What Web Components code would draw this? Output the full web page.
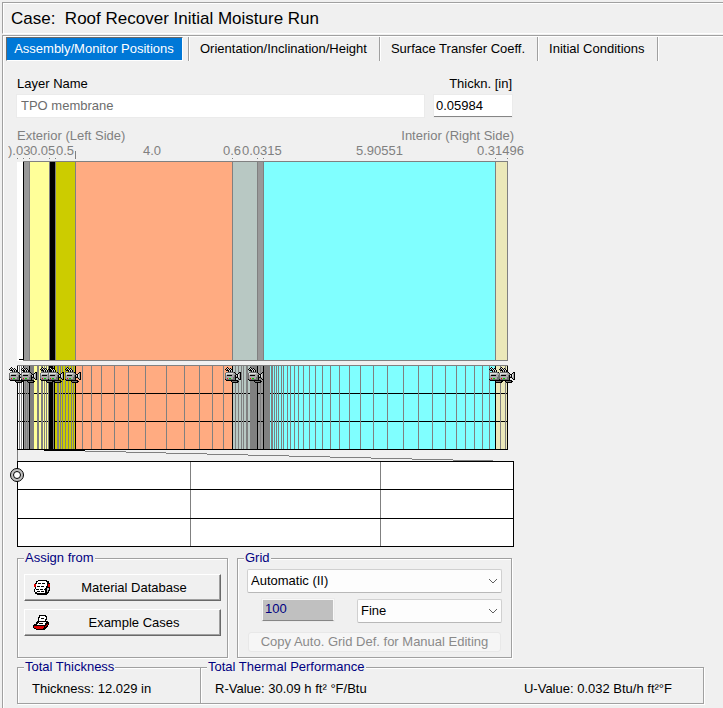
<!DOCTYPE html>
<html lang="en">
<head>
<meta charset="utf-8">
<title>Roof Recover Initial Moisture Run</title>
<style>
    html, body{
        height: 100%;
    }
    body{
        margin: 0;
        background: #f0f0f0;
        color: #000;
        font: 13px/16px "Liberation Sans", Arial, sans-serif;
    }
</style>
</head>
<body>
<case-window></case-window>

<script>
class CaseHeader extends HTMLElement{
    constructor(){
        super();
        this.attachShadow({mode:'open'});
        this.shadowRoot.innerHTML = `
            <style>
                :host{
                    display: block;
                    border-top: 1px solid #a0a0a0;
                    border-left: 1px solid #a0a0a0;
                    border-bottom: 1px solid #fff;
                    box-shadow: inset 1px 1px #fff;
                }
                h1{
                    margin: 0;
                    padding: 6px 8px 4px;
                    font-size: 17px;
                    line-height: 20px;
                    font-weight: normal;
                    white-space: pre;
                }
            </style>
            <h1><slot></slot></h1>
        `;
    }
}

class TabBar extends HTMLElement{
    constructor(){
        super();
        this.attachShadow({mode:'open'});
        this.shadowRoot.innerHTML = `
            <style>
                :host{
                    display: flex;
                    padding: 1px 0 0 3px;
                }
            </style>
            <slot></slot>
        `;
    }
}

class TabItem extends HTMLElement{
    constructor(){
        super();
        this.attachShadow({mode:'open'});
        this.shadowRoot.innerHTML = this.TabTemplate();
    }

    static get observedAttributes(){
        return['active'];
    }

    TabTemplate(){
        const active = this.hasAttribute('active');

        return `
            <style>
                :host{
                    display: block;
                    padding-right: ${active ? '5px' : '0'};
                    border-right: 1px solid #a0a0a0;
                    box-shadow: 1px 0 #fff;
                }
                button{
                    display: block;
                    margin: 0;
                    padding: ${active ? '2px 6px 2px 5px' : '3px 12px 3px 11px'};
                    border: ${active ? '1px solid' : '0'};
                    border-color: #696969 #fff #fff #696969;
                    min-width: ${active ? '177px' : '0'};
                    height: 24px;
                    font: inherit;
                    white-space: nowrap;
                    color: ${active ? '#fff' : '#000'};
                    background: ${active ? '#0078d7' : 'transparent'};
                }
            </style>
            <button type="button"><slot></slot></button>
        `;
    }

    attributeChangedCallback(){
        this.shadowRoot.innerHTML = this.TabTemplate();
    }
}

class TextField extends HTMLElement{
    constructor(){
        super();
        this.attachShadow({mode:'open'});
    }

    connectedCallback(){
        const tone = this.getAttribute('tone') || 'edit';
        const label = this.getAttribute('label');

        this.shadowRoot.innerHTML = `
            <style>
                :host{
                    display: block;
                }
                label{
                    display: block;
                    margin-bottom: 3px;
                }
                :host([align=right]) label{
                    text-align: right;
                }
                input{
                    display: block;
                    box-sizing: border-box;
                    width: 100%;
                    height: 22px;
                    margin: 0;
                    padding: 0 2px 1px;
                    border: 0;
                    border-radius: 0;
                    font: inherit;
                    color: #000;
                    background: #fff;
                    outline: 1px solid #ebebeb;
                }
                .edit{
                    border-bottom: 1px solid #868686;
                }
                .locked{
                    padding: 0 4px 2px;
                    color: #6d6d6d;
                }
                .gray{
                    padding: 0 2px 3px;
                    border: 1px solid #f8f8f8;
                    border-bottom: 1px solid #868686;
                    color: navy;
                    background: #c0c0c0;
                }
            </style>
            ${label ? `<label for="field">${label}</label>` : ''}
            <input id="field" type="text" class="${tone}" value="${this.getAttribute('value')}"
                ${label ? '' : `aria-label="${this.getAttribute('name')}"`} ${tone === 'edit' ? '' : 'readonly'}>
        `;
    }
}

class SelectBox extends HTMLElement{
    constructor(){
        super();
        this.attachShadow({mode:'open'});
    }

    connectedCallback(){
        const options = this.getAttribute('options').split('|');

        this.shadowRoot.innerHTML = `
            <style>
                :host{
                    display: grid;
                    align-items: center;
                }
                select, svg{
                    grid-area: 1 / 1;
                }
                select{
                    appearance: none;
                    width: 100%;
                    height: 24px;
                    margin: 0;
                    padding: 0 24px 0 3px;
                    border: 1px solid #d0d0d0;
                    border-bottom-color: #b8b8b8;
                    border-radius: 2px;
                    background: #fdfdfd;
                    color: #000;
                    font: inherit;
                }
                svg{
                    justify-self: end;
                    margin-right: 4px;
                    pointer-events: none;
                }
            </style>
            <select aria-label="${this.getAttribute('name')}">
                ${options.map(o => `<option>${o}</option>`).join('')}
            </select>
            <svg width="10" height="6" viewBox="0 0 10 6"><path d="M1 1l4 4 4-4" fill="none" stroke="#606060"/></svg>
        `;
    }
}

class GroupBox extends HTMLElement{
    constructor(){
        super();
        this.attachShadow({mode:'open'});
        this.shadowRoot.innerHTML = `
            <style>
                :host{
                    display: block;
                }
                fieldset{
                    box-sizing: border-box;
                    height: 100%;
                    min-width: 0;
                    margin: 0;
                    padding: 0 6px;
                    border: 1px solid #a0a0a0;
                    box-shadow: 1px 1px #fff, inset 1px 1px #fff;
                }
                legend{
                    padding: 0 1px;
                    color: navy;
                    background: #f0f0f0;
                    line-height: 14px;
                }
            </style>
            <fieldset>
                <legend>${this.getAttribute('caption')}</legend>
                <slot></slot>
            </fieldset>
        `;
    }
}

class ActionButton extends HTMLElement{
    constructor(){
        super();
        this.attachShadow({mode:'open'});
        this.shadowRoot.innerHTML = `
            <style>
                :host{
                    display: block;
                }
                button{
                    display: flex;
                    align-items: center;
                    width: 100%;
                    height: 27px;
                    margin: 0;
                    padding: 0 8px;
                    border: 1px solid;
                    border-color: #fff #696969 #696969 #fff;
                    box-shadow: inset -1px -1px #a0a0a0;
                    background: #f0f0f0;
                    color: #000;
                    font: inherit;
                }
                span{
                    flex: 1;
                    padding-left: 5px;
                }
            </style>
            <button type="button"><slot name="icon"></slot><span><slot></slot></span></button>
        `;
    }
}

// Camera sprite, one character per pixel
const CAMERA = [
    '..k.............',
    '.kwk.k..........',
    'k.kwkwk.........',
    '.kkkwkwk........',
    '...kgkgk........',
    '.ddddddddk....kk',
    'dwwwwwwwggk..kgk',
    'dwggggggggdkkwgk',
    'dgkkkkkggdkwkwgk',
    'dggggggggdkgkwgk',
    'dgggggggddkkkggk',
    'dgrgnnggddk..kgk',
    'kdddddddddk...kk',
    '.kkkkkkkkkkkk...',
    '......kdddddkk..',
    '.......kkkkkk...'
];
const INK = {k:'#000', g:'#a8a8a8', w:'#e0e0e0', d:'#707070', r:'#f00000', n:'#00d000'};

function sprite(rows, ink, x, y){
    let out = '';
    rows.forEach((row, j) => {
        for(let i = 0; i < row.length; i++){
            if(ink[row[i]]) out += `<rect x="${x + i}" y="${y + j}" width="1" height="1" fill="${ink[row[i]]}"/>`;
        }
    });
    return out;
}

// Layers from the exterior side: start, end, fill
const LAYERS = [
    [0, 6, '#fff'],
    [6, 12, '#999'],
    [12, 32, '#ff9'],
    [32, 38, '#000'],
    [38, 58, '#cc0'],
    [58, 215, '#ffab81'],
    [215, 240, '#b8c8c3'],
    [240, 246, '#999'],
    [246, 478, '#80ffff'],
    [478, 490, '#ebe8b9']
];

class LayerDiagram extends HTMLElement{
    constructor(){
        super();
        this.attachShadow({mode:'open'});

        const fills = LAYERS.map(([a, b, c]) => `<rect x="${a}" y="18" width="${b - a}" height="199" fill="${c}"/>`).join('');
        const edges = [12, 32, 38, 58, 215, 240, 246, 478, 490].map(x => `<rect x="${x}" y="17" width="1" height="200" fill="#808080"/>`).join('');
        const ticks = [0, 6, 12, 32, 38, 215, 240, 246, 478, 490].map(x => `<rect x="${x}" y="14" width="1" height="1" fill="#808080"/>`).join('');

        this.shadowRoot.innerHTML = `
            <style>
                :host{
                    display: block;
                }
                .sides{
                    display: flex;
                    justify-content: space-between;
                    color: #808080;
                }
                svg{
                    display: block;
                    margin-left: -9px;
                    shape-rendering: crispEdges;
                }
                text{
                    font: inherit;
                    fill: #808080;
                }
            </style>
            <div class="sides"><span>Exterior (Left Side)</span><span>Interior (Right Side)</span></div>
            <svg width="520" height="217" viewBox="-9 0 520 217">
                <text x="-9" y="11">).03</text>
                <text x="13" y="11">0.05</text>
                <text x="39" y="11">0.5</text>
                <text x="126" y="11">4.0</text>
                <text x="206" y="11">0.6</text>
                <text x="225" y="11">0.0315</text>
                <text x="339" y="11">5.90551</text>
                <text x="460" y="11">0.31496</text>
                <rect x="58" y="7" width="1" height="8" fill="#808080"/>
                ${ticks}
                ${fills}
                <rect x="6" y="17" width="485" height="1" fill="#808080"/>
                ${edges}
                <rect x="6" y="18" width="1" height="199" fill="#000"/>
                <rect x="6" y="216" width="485" height="1" fill="#808080"/>
                <rect x="2" y="215" width="4" height="1" fill="#000"/>
            </svg>
        `;
    }
}

class MeshDiagram extends HTMLElement{
    constructor(){
        super();
        this.attachShadow({mode:'open'});

        const mesh = [2, 4, 8, 10, 13, 14, 15, 16, 20, 21, 24, 25, 27, 29, 31, 36, 40, 41, 43, 45, 48, 51, 54, 56,
            65, 74, 84, 97, 111, 128, 149, 167, 182, 195, 206, 218, 221, 224, 226, 229, 230, 233, 243,
            254, 255, 257, 259, 261, 264, 266, 270, 273, 277, 281, 286, 292, 298, 305, 313, 322, 332, 343, 356, 370,
            386, 401, 415, 428, 439, 448, 457, 465, 472, 483, 488];
        const lines = mesh.map(x => `<rect x="${x}" y="0" width="1" height="84" fill="#808080"/>`).join('');
        const bounds = [0, 6, 12, 58, 215, 240, 246, 478, 490].map(x => `<rect x="${x}" y="0" width="1" height="85" fill="#000"/>`).join('');
        const dense = [[13, 4], [234, 6], [247, 6]].map(([x, w]) => `<rect x="${x}" y="0" width="${w}" height="84" fill="#808080"/>`).join('');
        const fills = LAYERS.map(([a, b, c]) => `<rect x="${a}" y="0" width="${b - a}" height="84" fill="${c}"/>`).join('');
        const rows = [28, 56, 84].map(y => `<rect x="0" y="${y}" width="491" height="1" fill="#000"/>`).join('');
        const cameras = [-8, 4, 23, 31, 48, 208, 231, 472, 482].map(x => sprite(CAMERA, INK, x, 2)).join('');

        this.shadowRoot.innerHTML = `
            <style>
                :host{
                    display: block;
                }
                svg{
                    display: block;
                    margin-left: -9px;
                    shape-rendering: crispEdges;
                }
            </style>
            <svg width="520" height="96" viewBox="-9 0 520 96">
                ${fills}
                ${rows}
                ${lines}
                ${dense}
                ${bounds}
                <rect x="0" y="0" width="491" height="1" fill="#808080"/>
                ${cameras}
                <path d="M0.5 85V96" stroke="#808080"/>
                <rect x="27" y="84" width="41" height="2" fill="#000"/>
                <path d="M68 86.5h41M109 87.5h40M149 88.5h41M190 89.5h41M231 90.5h41M272 91.5h41M313 92.5h41M354 93.5h41M395 94.5h41M436 95.5h40" stroke="#808080"/>
            </svg>
        `;
    }
}

class DetailGrid extends HTMLElement{
    constructor(){
        super();
        this.attachShadow({mode:'open'});
        this.shadowRoot.innerHTML = `
            <style>
                :host{
                    display: block;
                }
                svg{
                    display: block;
                    margin-left: -9px;
                }
            </style>
            <svg width="520" height="86" viewBox="-9 0 520 86">
                <g shape-rendering="crispEdges">
                    <rect width="497" height="86" fill="#fff"/>
                    <path d="M173.5 0V86M363.5 0V86" stroke="#808080"/>
                    <path d="M0 28.5H497M0 57.5H497M0.5 0.5H496.5V85.5H0.5Z" fill="none" stroke="#000"/>
                </g>
                <circle cx="0" cy="14" r="6.5" fill="#c0c0c0" stroke="#000"/>
                <circle cx="0" cy="14" r="3.5" fill="#fff" stroke="#000"/>
            </svg>
        `;
    }
}

class CaseWindow extends HTMLElement{
    constructor(){
        super();
        this.attachShadow({mode:'open'});
        this.shadowRoot.innerHTML = `
            <style>
                :host{
                    display: flex;
                    flex-direction: column;
                    box-sizing: border-box;
                    min-height: 100%;
                    padding: 2px 0 0 2px;
                }
                main{
                    flex: 1;
                    border-top: 1px solid #a0a0a0;
                    border-left: 1px solid #a0a0a0;
                    box-shadow: inset 1px 1px #fff;
                    margin-top: 1px;
                }
                .editor{
                    display: flex;
                    flex-direction: column;
                    max-width: 497px;
                    padding: 15px 14px 0;
                }
                .fields{
                    display: grid;
                    grid-template-columns: 1fr 78px;
                    gap: 10px;
                    padding-right: 2px;
                    margin-bottom: 11px;
                }
                mesh-diagram{
                    margin-top: 4px;
                }
                .groups{
                    display: grid;
                    grid-template-columns: 211px 1fr;
                    gap: 9px;
                    margin: 4px 2px 0 0;
                }
                .assign{
                    display: grid;
                    gap: 8px;
                    padding: 9px 0 21px;
                }
                .grid{
                    display: grid;
                    grid-template-columns: 72px 1fr;
                    gap: 6px 24px;
                    padding: 4px 3px 1px;
                }
                .mode, .copy{
                    grid-column: 1 / -1;
                }
                .count{
                    margin-left: 15px;
                    width: 72px;
                }
                .level{
                    margin-left: 14px;
                }
                .copy{
                    height: 20px;
                    margin: 3px 1px 0;
                    padding: 0;
                    border: 1px solid #e8e8e8;
                    border-radius: 3px;
                    background: #f6f6f6;
                    color: #8a8a8a;
                    font: inherit;
                }
                .totals{
                    display: grid;
                    grid-template-columns: 184px 1fr;
                    margin: 2px 19px 0 14px;
                }
                .totals group-box + group-box{
                    margin-left: -1px;
                }
                .totals p{
                    display: flex;
                    justify-content: space-between;
                    margin: 0;
                    padding: 7px 25px 6px 8px;
                }
            </style>
            <case-header>Case:  Roof Recover Initial Moisture Run</case-header>
            <main>
                <tab-bar>
                    <tab-item active>Assembly/Monitor Positions</tab-item>
                    <tab-item>Orientation/Inclination/Height</tab-item>
                    <tab-item>Surface Transfer Coeff.</tab-item>
                    <tab-item>Initial Conditions</tab-item>
                </tab-bar>
                <div class="editor">
                    <div class="fields">
                        <text-field label="Layer Name" value="TPO membrane" tone="locked"></text-field>
                        <text-field label="Thickn. [in]" value="0.05984" align="right"></text-field>
                    </div>
                    <layer-diagram></layer-diagram>
                    <mesh-diagram></mesh-diagram>
                    <detail-grid></detail-grid>
                    <div class="groups">
                        <group-box caption="Assign from">
                            <div class="assign">
                                <action-button>
                                    <svg slot="icon" width="18" height="17" viewBox="0 0 18 17" shape-rendering="crispEdges">
                                        <path d="M5 1h9v1h2v2h1v8h-1v2h-1v1h-1v1H4v-1H2v-2H1v-3h1V4h1V2h2z" fill="#000"/>
                                        <path d="M5 2h8v1h1v4h-1v2h-1v5H4v-1H2v-3h1V5h1V3h1z" fill="#fff"/>
                                        <path d="M5 4.5h7M4 7.5h8M3 10.5h9M4 12.5h8" stroke="#000" stroke-dasharray="3 1"/>
                                        <path d="M1 5h2v3H1zM15 5h2v3h-2z" fill="#e00000"/>
                                        <path d="M14 9h1v4h-1zM15 9h1v2h-1z" fill="#c0c0c0"/>
                                    </svg>
                                    Material Database
                                </action-button>
                                <action-button>
                                    <svg slot="icon" width="18" height="17" viewBox="0 0 18 17" shape-rendering="crispEdges">
                                        <path d="M6 1h7v1h1v4h-1v1h2v1h1v3h-1v2h-1v1h-1v1h-1v1H3v-1H1v-1H0v-3h1v-1h2V8h1V7h1V3h1z" fill="#000"/>
                                        <path d="M7 2h5v1h1v2h-1v2H6V4h1zM6 8h7v1h-1v2H4v-1h1z" fill="#fff"/>
                                        <path d="M8 4.5h3M6 9.5h4" stroke="#000"/>
                                        <path d="M1 12h10v2h-1v1H3v-1H1zM12 12h1v-1h1v-1h1v1h-1v1h-1v1h-1z" fill="#e00000"/>
                                    </svg>
                                    Example Cases
                                </action-button>
                            </div>
                        </group-box>
                        <group-box caption="Grid">
                            <div class="grid">
                                <select-box class="mode" name="Grid mode" options="Automatic (II)|Manual"></select-box>
                                <text-field class="count" name="Grid elements" value="100" tone="gray"></text-field>
                                <select-box class="level" name="Grid level" options="Fine|Medium|Coarse"></select-box>
                                <button class="copy" type="button" disabled>Copy Auto. Grid Def. for Manual Editing</button>
                            </div>
                        </group-box>
                    </div>
                </div>
                <div class="totals">
                    <group-box caption="Total Thickness"><p><span>Thickness: 12.029 in</span></p></group-box>
                    <group-box caption="Total Thermal Performance">
                        <p><span>R-Value: 30.09 h ft² °F/Btu</span><span>U-Value: 0.032 Btu/h ft²°F</span></p>
                    </group-box>
                </div>
            </main>
        `;
    }
}

customElements.define('case-header', CaseHeader);
customElements.define('tab-bar', TabBar);
customElements.define('tab-item', TabItem);
customElements.define('text-field', TextField);
customElements.define('select-box', SelectBox);
customElements.define('group-box', GroupBox);
customElements.define('action-button', ActionButton);
customElements.define('layer-diagram', LayerDiagram);
customElements.define('mesh-diagram', MeshDiagram);
customElements.define('detail-grid', DetailGrid);
customElements.define('case-window', CaseWindow);
</script>
</body>
</html>
